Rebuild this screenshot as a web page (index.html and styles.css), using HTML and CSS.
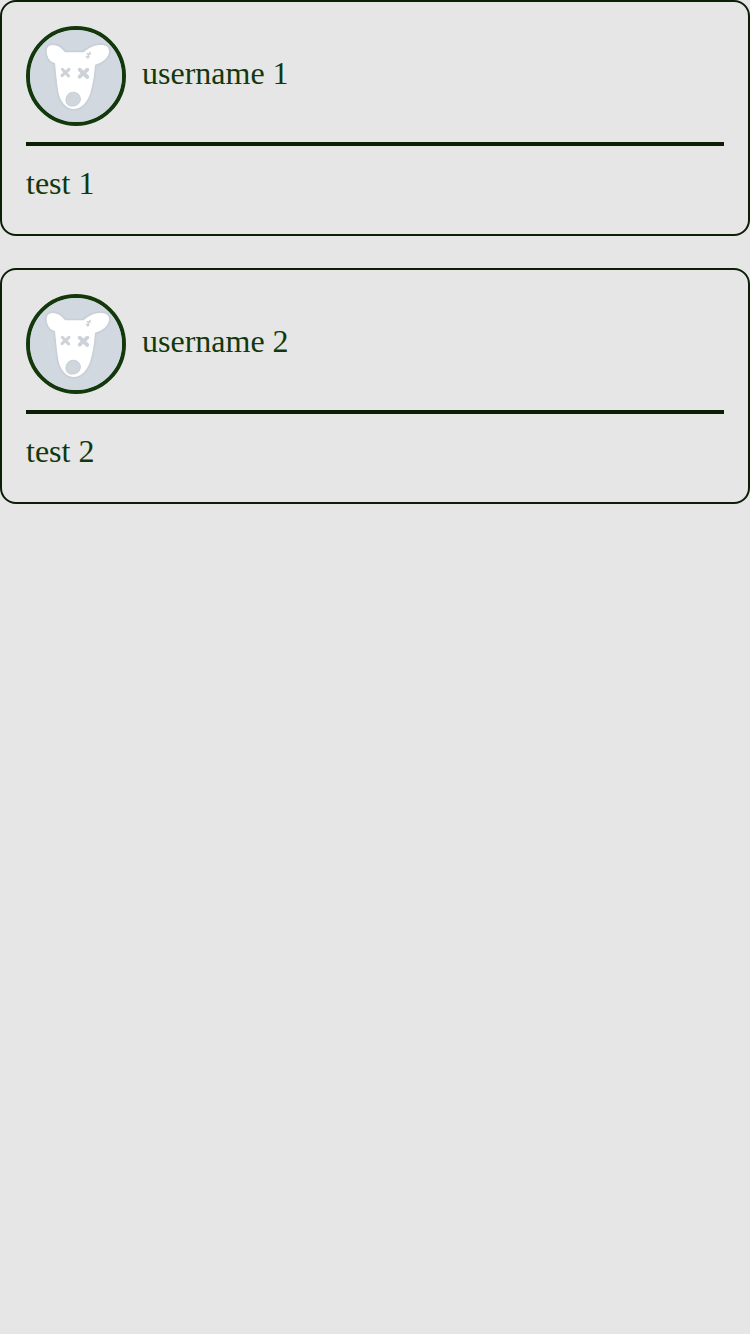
FILE: index.html
```html
<!DOCTYPE html>
<html lang="en">
<head>
<meta charset="utf-8">
<title>Posts</title>
<link rel="stylesheet" href="styles.css">
</head>
<body>
<svg class="defs" aria-hidden="true">
  <symbol id="dog" viewBox="30 30 276 276">
    <rect x="30" y="30" width="276" height="276" fill="#d1d8e0"/>
    <path class="dog-shade" d="M135 97 C127 86 114 75 98 75 C85 75 79 84 80 96 C81 112 91 127 105 129 C108 157 110 187 115 216 C119 240 137 267 160 267 C185 267 203 244 211 218 C219 191 223 162 225 134 C247 130 267 112 267 94 C267 80 256 74 239 75 C219 76 203 86 191 97 Z"/>
    <path class="dog-head" d="M135 97 C127 86 114 75 98 75 C85 75 79 84 80 96 C81 112 91 127 105 129 C108 157 110 187 115 216 C119 240 137 267 160 267 C185 267 203 244 211 218 C219 191 223 162 225 134 C247 130 267 112 267 94 C267 80 256 74 239 75 C219 76 203 86 191 97 Z"/>
    <path class="dog-nose" d="M158 217 C171 216 181 225 181 237 C181 250 170 258 157 258 C144 259 138 251 138 240 C138 227 146 218 158 217 Z"/>
    <path class="dog-eye-left" d="M127 148 L146 168 M147 148 L126 167"/>
    <path class="dog-eye-right" d="M179 149 L202 171 M202 149 L179 170"/>
    <path class="dog-scar" d="M211 97 L205 105 L203 114 M202 101 L210 103 M199 110 L207 111"/>
  </symbol>
</svg>
<main class="posts">
  <article class="post">
    <header class="post-header">
      <svg class="avatar"><use href="#dog"/></svg>
      <span class="username">username 1</span>
    </header>
    <p class="post-text">test 1</p>
  </article>
  <article class="post">
    <header class="post-header">
      <svg class="avatar"><use href="#dog"/></svg>
      <span class="username">username 2</span>
    </header>
    <p class="post-text">test 2</p>
  </article>
</main>
</body>
</html>
```
FILE: styles.css
```css
* { box-sizing: border-box; }

body {
  margin: 0;
  background: #e6e6e6;
  color: #12380b;
  font-family: "Liberation Serif", serif;
  font-size: 32px;
  line-height: 36px;
}

.defs { display: none; }

.posts {
  display: flex;
  flex-direction: column;
  gap: 32px;
}

.post {
  height: 236px;
  padding: 24px;
  border: 2px solid #0b1f07;
  border-radius: 16px;
}

.post-header {
  display: flex;
  align-items: center;
  gap: 16px;
  height: 120px;
  padding-bottom: 16px;
  border-bottom: 4px solid #0b1f07;
}

.avatar {
  flex: none;
  width: 100px;
  height: 100px;
  border: 4px solid #12380b;
  border-radius: 50%;
  background: #d1d8e0;
}

.username { padding-bottom: 6px; }

.post-text {
  margin: 0;
  padding-top: 19px;
}

.dog-shade {
  fill: none;
  stroke: #c4cad3;
  stroke-width: 12px;
  stroke-opacity: 0.4;
}

.dog-head {
  fill: #fff;
  stroke: #c8cdd6;
  stroke-width: 6px;
  stroke-opacity: 0.6;
  paint-order: stroke;
}

.dog-nose {
  fill: #d0d6de;
  stroke: #c8ccd2;
  stroke-width: 3px;
}

.dog-eye-left,
.dog-eye-right,
.dog-scar {
  fill: none;
  stroke: #cdd1d8;
  stroke-linecap: round;
}

.dog-eye-left { stroke-width: 9px; }
.dog-eye-right { stroke-width: 11.5px; }
.dog-scar { stroke-width: 4.5px; }
```
